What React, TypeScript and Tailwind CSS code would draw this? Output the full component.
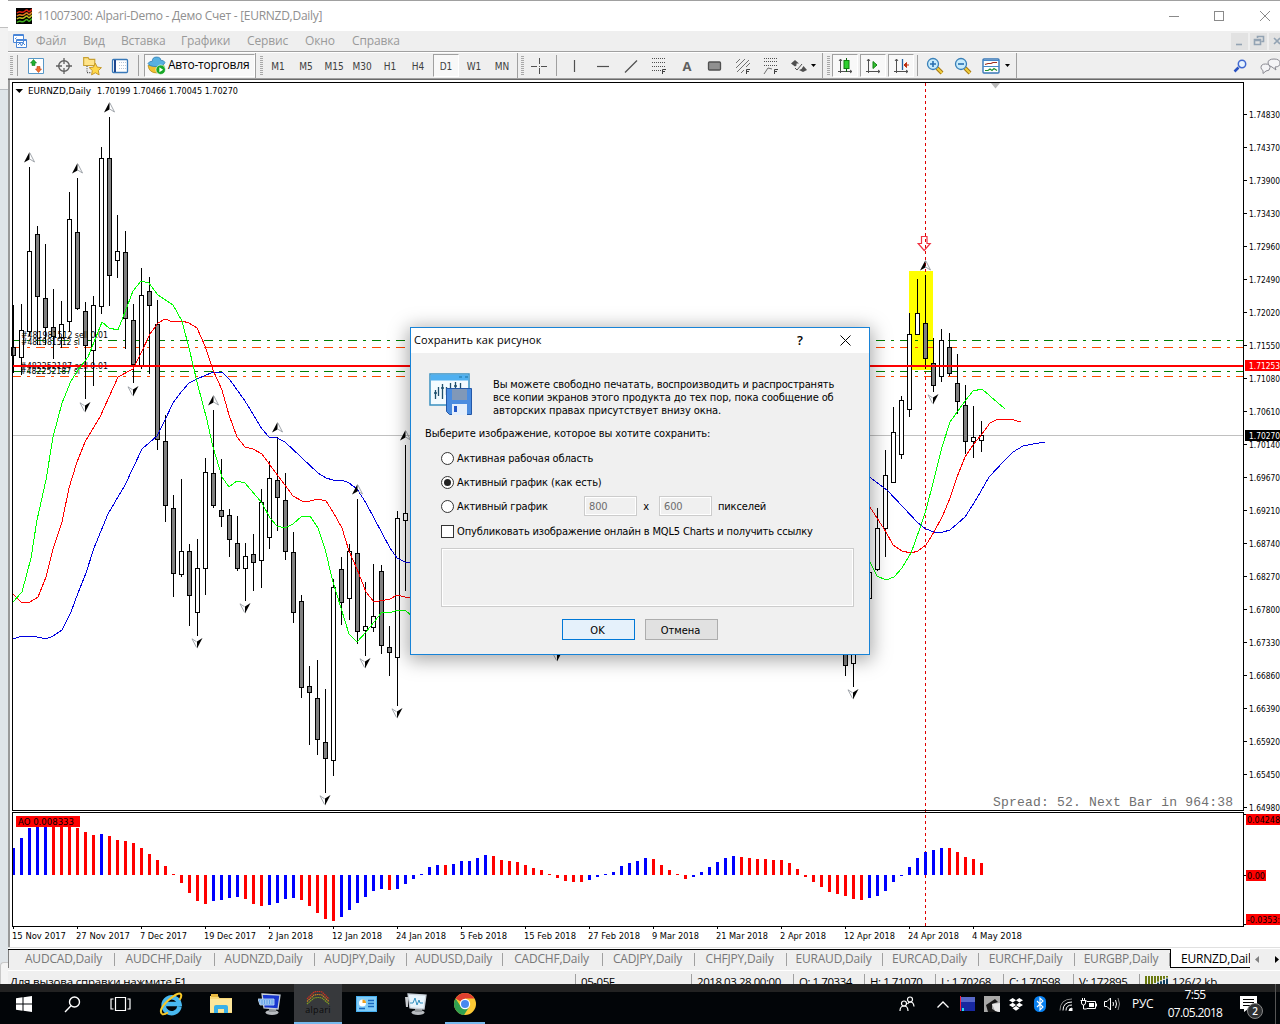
import clsx from "clsx";
import { FC, ReactNode } from "react";

/* ---------- chart data ---------- */

// x, high, low, body top, body bottom, 1 = bullish (hollow)
type Candle = [number, number, number, number, number, 0 | 1];

const candles: Candle[] = [
  [13, 305, 373, 347, 355, 0],
  [21, 304, 375, 330, 357, 1],
  [29, 167, 336, 251, 331, 1],
  [37, 226, 345, 234, 296, 0],
  [45, 244, 345, 298, 327, 0],
  [53, 289, 359, 327, 336, 0],
  [61, 301, 348, 324, 337, 1],
  [69, 192, 332, 219, 321, 1],
  [77, 178, 310, 232, 308, 0],
  [85, 302, 399, 311, 345, 0],
  [93, 296, 386, 305, 350, 1],
  [101, 147, 314, 158, 306, 1],
  [109, 117, 306, 158, 275, 0],
  [117, 215, 278, 251, 260, 1],
  [125, 231, 349, 252, 318, 0],
  [133, 304, 383, 320, 364, 0],
  [141, 268, 369, 295, 365, 1],
  [149, 277, 374, 291, 305, 0],
  [157, 300, 450, 324, 439, 0],
  [165, 415, 522, 441, 505, 0],
  [173, 495, 597, 508, 573, 0],
  [181, 479, 577, 551, 574, 1],
  [189, 544, 626, 551, 595, 0],
  [197, 539, 636, 568, 612, 1],
  [205, 458, 595, 472, 568, 1],
  [213, 410, 508, 473, 505, 0],
  [221, 459, 527, 510, 516, 0],
  [229, 509, 557, 515, 539, 0],
  [237, 516, 571, 543, 568, 0],
  [245, 543, 601, 556, 568, 1],
  [253, 534, 591, 554, 562, 0],
  [261, 489, 588, 502, 560, 1],
  [269, 461, 549, 478, 537, 1],
  [277, 437, 531, 480, 497, 0],
  [285, 473, 560, 500, 551, 0],
  [293, 532, 623, 552, 612, 0],
  [301, 595, 698, 601, 687, 0],
  [309, 666, 745, 686, 692, 0],
  [317, 660, 755, 698, 739, 0],
  [325, 689, 793, 742, 758, 0],
  [333, 579, 776, 587, 760, 1],
  [341, 557, 625, 569, 602, 0],
  [349, 544, 620, 551, 598, 1],
  [357, 499, 644, 553, 631, 0],
  [365, 582, 656, 626, 630, 1],
  [373, 564, 632, 616, 627, 1],
  [381, 565, 654, 571, 645, 0],
  [389, 626, 676, 647, 652, 0],
  [397, 511, 706, 518, 657, 1],
  [405, 445, 591, 513, 520, 1],
  [845, 600, 676, 620, 665, 0],
  [853, 600, 687, 620, 663, 1],
  [869, 560, 599, 572, 598, 1],
  [877, 508, 571, 528, 569, 1],
  [885, 450, 557, 475, 528, 1],
  [893, 407, 483, 432, 482, 1],
  [901, 396, 459, 400, 454, 1],
  [909, 313, 417, 334, 409, 1],
  [917, 279, 334, 313, 334, 1],
  [925, 275, 369, 323, 358, 0],
  [933, 338, 392, 363, 385, 0],
  [941, 329, 382, 340, 376, 1],
  [949, 333, 376, 347, 373, 0],
  [957, 354, 414, 383, 401, 0],
  [965, 385, 454, 405, 441, 0],
  [973, 406, 458, 437, 441, 1],
  [981, 421, 452, 435, 440, 1],
];

const upFractals = [
  [29, 152], [77, 163], [109, 102], [213, 395], [277, 422], [357, 484], [405, 430], [925, 260],
];
const downFractals = [
  [85, 402], [133, 386], [197, 638], [245, 603], [325, 795], [365, 658], [397, 708], [557, 651],
  [853, 689], [933, 394],
];

const greenLeft =
  "13,602 22,592 31,558 37,520 46,480 53,437 62,403 71,381 78,370 88,357 102,322 109,328 118,330 125,312 133,291 141,281 149,283 158,295 173,305 182,321 189,348 197,382 207,420 213,447 222,477 229,487 237,481 245,483 262,503 270,518 277,526 285,528 293,524 302,516 310,516 318,528 325,549 333,582 341,608 349,634 357,642 366,632 382,612 390,613 397,610 405,610 412,616";
const greenRight =
  "868,558 877,576 886,580 894,577 902,568 911,553 920,528 926,510 933,483 942,447 950,422 965,401 973,391 982,389 990,396 1005,409";
const redLeft =
  "13,594 22,603 30,602 38,597 46,577 53,549 62,522 69,488 77,462 85,442 100,417 118,377 133,369 142,351 150,334 158,323 165,319 173,322 182,321 189,323 197,328 205,346 213,370 222,390 229,415 237,437 245,447 253,449 262,454 270,465 293,496 302,501 310,501 318,499 326,501 333,512 342,528 349,551 357,569 366,592 374,602 390,599 397,595 405,597 412,598";
const redRight =
  "868,504 877,518 886,532 893,545 902,551 911,553 918,551 926,545 934,532 943,515 950,498 957,477 965,457 973,445 982,434 990,423 998,419 1010,419 1021,422";
const blueLeft =
  "13,639 22,636 33,636 46,639 53,636 62,630 71,612 78,593 86,573 94,548 108,514 125,485 142,449 157,436 165,420 173,403 182,391 189,383 197,379 213,372 222,372 230,380 245,401 262,429 269,437 277,438 285,442 318,473 326,478 333,480 342,480 349,483 357,489 366,503 382,533 390,548 397,558 405,562 412,562";
const blueRight =
  "868,476 887,490 903,507 918,523 926,529 934,532 943,532 950,530 965,517 974,503 981,491 989,477 1005,460 1013,452 1023,446 1033,444 1045,442";

// Awesome Oscillator: bar edge for every 8px step, negative sign marks a falling (red) bar
const oscillator = [
  848, 838, 828, 826, 826, -826, -826, -826, -828, -832, -835, 834, -836, -840, -841, -843, -848,
  -854, -860, -866, -874, -883, -893, -901, -904, 901, 900, 898, 897, -899, -904, -906, 905, 903,
  899, 898, -900, -906, -913, -919, -921, 917, 910, 903, 897, 891, 889, -890, 889, 884, 879, 874,
  867, 865, -865, 864, 861, 861, 858, 855, -856, -860, -861, -862, -865, -868, -870, -874, -878,
  -881, -882, -882, 880, 877, 874, 872, 866, 863, 861, 858, -859, -865, -870, -874, -879, 877, 872,
  867, 862, 858, 856, -857, -858, -859, -859, -860, -860, -863, -869, -877, -882, -887, -892, -894,
  -896, -899, -900, 898, 896, 891, 882, 876, 867, 858, 852, 850, 848, -848, -852, -857, -859, -863,
];

const prices = [
  "1.74830", "1.74370", "1.73900", "1.73430", "1.72960", "1.72490", "1.72020", "1.71550",
  "1.71080", "1.70610", "1.70140", "1.69670", "1.69210", "1.68740", "1.68270", "1.67800",
  "1.67330", "1.66860", "1.66390", "1.65920", "1.65450", "1.64980",
];

const dates: [string, number][] = [
  ["15 Nov 2017", 54], ["27 Nov 2017", 54], ["7 Dec 2017", 47], ["19 Dec 2017", 52],
  ["2 Jan 2018", 45], ["12 Jan 2018", 50], ["24 Jan 2018", 50], ["5 Feb 2018", 47],
  ["15 Feb 2018", 52], ["27 Feb 2018", 52], ["9 Mar 2018", 47], ["21 Mar 2018", 52],
  ["2 Apr 2018", 46], ["12 Apr 2018", 51], ["24 Apr 2018", 51], ["4 May 2018", 50],
];

/* ---------- chart ---------- */

interface ITag {
  x: number;
  y: number;
  w: number;
  fill?: string;
  children: string;
}

const Tag: FC<ITag> = ({ x, y, w, fill = "#000", children }) => (
  <text x={x} y={y} textLength={w} lengthAdjust="spacingAndGlyphs" fill={fill}>
    {children}
  </text>
);

const Level: FC<{ y: number; color: string }> = ({ y, color }) => (
  <path d={`M12 ${y + 0.5}H1243`} stroke={color} strokeDasharray="9 6 3 6" />
);

const Chart: FC = () => (
  <svg
    width="1270"
    height="867"
    viewBox="10 80 1270 867"
    className="block shrink-0 bg-white [font-family:'DejaVu_Sans_Condensed','DejaVu_Sans',sans-serif] text-[9.5px]"
    shapeRendering="crispEdges"
    fill="none"
  >
    <path d="M909 271h24v99h-24z" fill="#ff0" />
    <path d="M12 435.5H1243" stroke="#c0c0c0" />
    <path d="M925.5 83V926" stroke="#e00000" strokeDasharray="3 3" />
    <Level y={340} color="#008000" />
    <Level y={347} color="#ff4500" />
    <Level y={371} color="#008000" />
    <Level y={376} color="#ff4500" />

    {candles.map(([x, high, low, top, bottom, up]) => (
      <g key={x} stroke="#000">
        <path d={`M${x + 0.5} ${high}V${low}`} />
        <rect
          x={x - 1.5}
          y={top + 0.5}
          width={4}
          height={bottom - top}
          fill={up ? "#fff" : "#808080"}
        />
      </g>
    ))}

    <Tag x={21} y={338} w={87}>#481981512 sell 0.01</Tag>
    <Tag x={21} y={345} w={59}>#481981512 sl</Tag>
    <Tag x={20} y={369} w={88}>#482252187 sell 0.01</Tag>
    <Tag x={20} y={374} w={60}>#482252187 sl</Tag>
    <path d="M12 366H1243" stroke="#f00" strokeWidth="2" />

    <g strokeWidth="1">
      <polyline points={blueLeft} stroke="#0000e0" />
      <polyline points={blueRight} stroke="#0000e0" />
      <polyline points={redLeft} stroke="#f00" />
      <polyline points={redRight} stroke="#f00" />
      <polyline points={greenLeft} stroke="#0f0" />
      <polyline points={greenRight} stroke="#0f0" />
    </g>

    <g shapeRendering="auto">
      {upFractals.map(([x, y]) => (
        <g key={x} transform={`translate(${x + 0.5} ${y})`}>
          <path d="M0 0L-5.5 10.5L0 7.5Z" fill="#000" />
          <path d="M.4 1L5 10L.4 7.2" stroke="#8a9098" strokeWidth=".8" />
        </g>
      ))}
      {downFractals.map(([x, y]) => (
        <g key={x} transform={`translate(${x} ${y})`}>
          <path d="M0 10.5L5.5 0L0 3.5Z" fill="#000" />
          <path d="M-.4 9.5L-5 .8L-.4 3.8" stroke="#8a9098" strokeWidth=".8" />
        </g>
      ))}
      <path
        d="M921.5 236.500h5.500v7h3.200l-6 7l-6-7h3.300z"
        stroke="#f03040"
        strokeWidth="1.2"
      />
      <path d="M991 83h9l-4.500 5.500z" fill="#b8b8b8" />
      <path d="M15.500 89h7.500l-3.700 4z" fill="#000" />
    </g>
    <Tag x={28} y={94} w={63}>EURNZD,Daily</Tag>
    <Tag x={97} y={94} w={141}>1.70199 1.70466 1.70045 1.70270</Tag>
    <text
      x="993"
      y="806"
      fill="#707070"
      textLength="240"
      className="[font-family:'Liberation_Mono',monospace] text-[13px]"
    >
      Spread: 52. Next Bar in 964:38
    </text>

    {/* oscillator window */}
    {oscillator.map((edge, i) => {
      const y = Math.abs(edge);
      return (
        <rect
          key={i}
          x={i ? 12 + 8 * i : 13}
          y={Math.min(y, 875)}
          width={i ? 3 : 2}
          height={Math.abs(y - 875)}
          fill={edge < 0 ? "#f00" : "#00f"}
        />
      );
    })}
    <path d="M16 816h64v11h-64z" fill="#f00" />
    <Tag x={18} y={825} w={56}>AO 0.008333</Tag>

    {/* frames and scales */}
    <path d="M12.500 82.500H1243.500V810.500H12.500zM12.500 812.500H1243.500V926.500H12.500z" stroke="#000" />
    <path d="M1244 814.500h3M1244 875.500h3M1244 924.500h3" stroke="#000" />
    {prices.map((p, i) => (
      <g key={p}>
        <path d={`M1244 ${114.5 + 33 * i}h3`} stroke="#000" />
        <Tag x={1249} y={118 + 33 * i} w={31}>{p}</Tag>
      </g>
    ))}
    <path d="M1245 360h35v11h-35z" fill="#f00" />
    <Tag x={1249} y={369} w={31} fill="#fff">1.71253</Tag>
    <path d="M1245 430h35v11h-35z" fill="#000" />
    <Tag x={1249} y={439} w={31} fill="#fff">1.70270</Tag>
    <path d="M1246 814h34v11h-34zM1246 870h20v11h-20zM1246 914h34v11h-34z" fill="#f00" />
    <Tag x={1247} y={823} w={33}>0.04248</Tag>
    <Tag x={1247} y={879} w={18}>0.00</Tag>
    <Tag x={1247} y={923} w={33}>-0.0353:</Tag>
    {dates.map(([label, w], i) => (
      <g key={label}>
        <path d={`M${13.5 + 64 * i} 927v2`} stroke="#000" />
        <Tag x={12 + 64 * i} y={939} w={w}>{label}</Tag>
      </g>
    ))}
  </svg>
);

/* ---------- window chrome ---------- */

const TitleBar: FC = () => (
  <div className="flex h-[31px] shrink-0 items-center border-t border-[#a0a0a0] bg-white pl-2">
    <svg width="16" height="16" viewBox="0 0 16 16" fill="none" strokeWidth="1.5">
      <rect width="16" height="16" fill="#000" />
      <path d="M1 5q2-2 4-1t4-1t3 0t4-2" stroke="#e02010" />
      <path d="M1 8q2-2 4-1t4-1t3 0t4-2" stroke="#e88020" />
      <path d="M1 11q2-2 4-1t4-1t3 0t4-2" stroke="#c0c020" />
      <path d="M1 14.500q2-2 4-1t4-1t3 0t4-2" stroke="#40b020" />
    </svg>
    <span className="ml-[5px] flex-1 text-xs tracking-[-0.27px] text-[#8f8f8f]">
      11007300: Alpari-Demo - Демо Счет - [EURNZD,Daily]
    </span>
    <svg width="112" height="12" viewBox="0 0 112 12" fill="none" stroke="#8a8a8a">
      <path d="M1 6.500h10" shapeRendering="crispEdges" />
      <path d="M46.500 1.500h9v9h-9z" shapeRendering="crispEdges" />
      <path d="M92 1l10 10M102 1L92 11" />
    </svg>
  </div>
);

const menu: [string, string][] = [
  ["Файл", "w-[47px]"],
  ["Вид", "w-[38px]"],
  ["Вставка", "w-[60px]"],
  ["Графики", "w-[66px]"],
  ["Сервис", "w-[58px]"],
  ["Окно", "w-[47px]"],
  ["Справка", "w-[60px]"],
];

const MenuBar: FC = () => (
  <div className="flex h-5 shrink-0 items-center bg-[#efefef] pl-[5px]">
    <svg width="15" height="15" viewBox="0 0 15 15" fill="#fff" stroke="#4a86d8">
      <path d="M.5.500h10v8h-10zM3.500 5.500h10v8h-10z" />
      <path d="M.5 1.500h10M3.500 6.500h10M5 11l2-2l1.500 3l1.500-3l2 2M2 5l1.500-1.500" fill="none" />
    </svg>
    <nav className="ml-[8px] flex flex-1 text-xs tracking-[-0.15px] text-[#999]">
      {menu.map(([label, width]) => (
        <span key={label} className={width}>
          {label}
        </span>
      ))}
    </nav>
    <div className="flex gap-0.5">
      {["M5 11.500h6", "M7.500 5V3.500h6v5h-2M4.500 6.500h6v5h-6zM4.500 7.500h6", "M5 5l6 6M11 5l-6 6"].map((d) => (
        <svg key={d} width="17" height="17" viewBox="0 0 17 17" className="bg-[#e2e2e2] last:w-[11px]" preserveAspectRatio="xMinYMid slice">
          <path d={d} fill="none" stroke="#93a3b3" strokeWidth="1.600" />
        </svg>
      ))}
    </div>
  </div>
);

const Grip: FC = () => (
  <span className="h-[19px] w-[3px] shrink-0 bg-[repeating-linear-gradient(#a8a8a8_0_1px,#efefef_1px_2px)]" />
);

const Divider: FC<{ className?: string }> = ({ className }) => (
  <span className={clsx("w-px shrink-0 bg-[#a0a0a0]", className ?? "h-[21px]")} />
);

const Tool: FC<{ children: ReactNode; active?: boolean }> = ({ children, active }) => (
  <span className="flex w-7 shrink-0 justify-center">
    <span
      className={clsx(
        "flex h-[23px] w-[26px] items-center justify-center border text-[10px] text-[#404040]",
        active
          ? "border-t-[#a0a0a0] border-r-white border-b-white border-l-[#a0a0a0] bg-[#f8f8f8]"
          : "border-transparent"
      )}
    >
      {children}
    </span>
  </span>
);

const Glyph: FC<{ children: ReactNode; size?: number }> = ({ children, size = 18 }) => (
  <svg width={size} height={size} viewBox="0 0 18 18" fill="none" stroke="#505050" className="shrink-0">
    {children}
  </svg>
);

const Caret: FC = () => (
  <svg width="5" height="3" viewBox="0 0 5 3" className="shrink-0">
    <path d="M0 0h5L2.500 3z" />
  </svg>
);

const Magnifier: FC<{ sign: string }> = ({ sign }) => (
  <Glyph>
    <path d="M11 11l5 5" stroke="#a87810" strokeWidth="4" />
    <path d="M11 11l5 5" stroke="#f0d040" strokeWidth="2" />
    <circle cx="7" cy="7" r="5.500" fill="#c8ecfc" stroke="#3a80b8" strokeWidth="1.300" />
    <path d={sign} stroke="#2870b0" strokeWidth="1.600" />
  </Glyph>
);

const Axes = () => <path d="M4.500 2v14M2 14.500h14M3 4l1.500-2L6 4M14 13l2 1.500l-2 1.500" stroke="#505050" />;

const FLetter = () => <path d="M12.500 17v-4.500H16M12.500 14.500H15" stroke="#404040" />;

const ToolBar: FC = () => (
  <div className="flex h-7 shrink-0 items-center border-t border-b border-t-[#a0a0a0] border-b-[#a0a0a0] bg-[#efefef] pt-px pl-0.5 shadow-[inset_0_1px_0_#fff]">
    <Grip />
    <Divider className="ml-[4px] h-[21px]" />
    <span className="ml-[4px] flex">
      <Tool>
        <Glyph>
          <path d="M1.500 1.500h15v15h-15z" fill="#fff" stroke="#5898c8" />
          <path d="M6.500 2.500l3 3.500h-1.500v2.500h-3V6H3.500z" fill="#20b030" stroke="#108020" strokeWidth=".6" />
          <path d="M11.500 15.500l-3-3.500H10V9.500h3v2.500h1.500z" fill="#f07030" stroke="#c04010" strokeWidth=".6" />
        </Glyph>
      </Tool>
      <Tool>
        <Glyph>
          <circle cx="9" cy="9" r="5.300" strokeWidth="1.400" stroke="#606060" />
          <path d="M9 1v6M9 11v6M1 9h6M11 9h6" stroke="#606060" strokeWidth="1.300" />
        </Glyph>
      </Tool>
      <Tool>
        <Glyph size={20}>
          <path d="M1.500 8.500v-7h4l1 1.500h5v5.500z" fill="#ffe48a" stroke="#c8a030" />
          <path d="M4.500 9v6h4" strokeDasharray="1 1" />
          <path d="M12 6.500l1.700 3.500l3.800.5l-2.800 2.600l.7 3.900l-3.400-1.900L8.600 17l.7-3.900L6.500 10.500l3.800-.5z" fill="#ffd84a" stroke="#c09020" strokeWidth=".8" />
        </Glyph>
      </Tool>
      <Tool>
        <Glyph>
          <rect x="1.500" y="2.500" width="15" height="13" rx="1" fill="#fff" stroke="#3878b8" strokeWidth="1.300" />
          <path d="M4 3v12" stroke="#204890" strokeWidth="2" />
          <path d="M8 5.500h7M8 8.500h7M8 11.500h7" stroke="#b8c8d8" strokeDasharray="1 1" />
        </Glyph>
      </Tool>
    </span>
    <Divider className="ml-[4px] h-[21px]" />
    <span className="ml-[5px] flex h-[23px] w-[111px] items-center border border-t-[#a0a0a0] border-r-white border-b-white border-l-[#a0a0a0] bg-[#f8f8f8] pl-0.5 text-xs text-black">
      <Glyph size={19}>
        <path d="M1 9q1 7 8 7t7-7z" fill="#f0c030" stroke="#b08810" strokeWidth=".7" />
        <path d="M1 7q1-2 4-2q0-4 4-4t4 3q3 0 4 2q-1 4-8 4T1 7z" fill="#58b0e0" stroke="#2878b0" strokeWidth=".7" />
        <circle cx="13" cy="13" r="4.500" fill="#18a828" stroke="#fff" strokeWidth=".6" />
        <path d="M11.700 10.700v4.600l3.600-2.300z" fill="#fff" stroke="none" />
      </Glyph>
      <span className="-mt-px ml-[2px] whitespace-nowrap tracking-[-0.22px]">Авто-торговля</span>
    </span>
    <Divider className="h-[25px]" />
    <span className="ml-[4px] flex">
      <Grip />
    </span>
    <span className="ml-px flex pt-0.5 [font-family:'DejaVu_Sans_Condensed','DejaVu_Sans',sans-serif]">
      {["M1", "M5", "M15", "M30", "H1", "H4"].map((p) => (
        <Tool key={p}>{p}</Tool>
      ))}
    </span>
    <span className="flex [font-family:'DejaVu_Sans_Condensed','DejaVu_Sans',sans-serif]">
      <Tool active>
        <span className="mt-0.5">D1</span>
      </Tool>
    </span>
    <span className="flex pt-0.5 [font-family:'DejaVu_Sans_Condensed','DejaVu_Sans',sans-serif]">
      <Tool>W1</Tool>
      <Tool>MN</Tool>
    </span>
    <Divider className="ml-px h-[25px]" />
    <span className="ml-[3px] flex">
      <Grip />
    </span>
    <span className="ml-px flex">
      <Tool>
        <Glyph>
          <path d="M9.500 1v6M9.500 11v6M1 9.500h6M11 9.500h6M9 9.500h1" shapeRendering="crispEdges" />
        </Glyph>
      </Tool>
    </span>
    <Divider className="ml-[3px] h-[21px]" />
    <span className="ml-[4px] flex">
      <Tool><Glyph><path d="M8.500 3v12" strokeWidth="1.200" /></Glyph></Tool>
      <Tool><Glyph><path d="M3 9.500h12" strokeWidth="1.200" /></Glyph></Tool>
      <Tool><Glyph><path d="M3 15.500L15 3.500" strokeWidth="1.200" /></Glyph></Tool>
      <Tool>
        <Glyph>
          <path d="M2 1.500h13M2 5.500h13M2 9.500h13M2 13.500h9" strokeDasharray="1 1" />
          <FLetter />
        </Glyph>
      </Tool>
      <Tool><span className="mt-0.5 text-[13px] font-bold text-[#606060]">A</span></Tool>
      <Tool><Glyph><rect x="2.500" y="5" width="12" height="8" rx="1" fill="#909090" strokeWidth="1.300" /></Glyph></Tool>
      <Tool>
        <Glyph>
          <path d="M2 6l4-4M2 11L11 2M3 15L15 3M7 16l3-3M12 10l4-4" stroke="#707070" />
          <FLetter />
        </Glyph>
      </Tool>
      <Tool>
        <Glyph>
          <path d="M2 1.500h14M2 4.500h14M2 8.500h14" strokeDasharray="1 1" />
          <path d="M2 17l4-6l4 1" stroke="#707070" />
          <FLetter />
        </Glyph>
      </Tool>
    </span>
    <span className="ml-[5px] flex items-center gap-[3px]">
      <Glyph>
        <path d="M5 3l4 3.500h-2.500v2L5 9.500L1 6.500zM13.500 9l3.500 4l-4 2l-4-2l2.500-1z" fill="#505050" stroke="none" />
        <path d="M5 11l2 2l5-6" />
      </Glyph>
      <Caret />
    </span>
    <Divider className="ml-[6px] h-[25px]" />
    <span className="ml-[4px] flex">
      <Grip />
    </span>
    <span className="ml-px flex">
      <Tool active>
        <Glyph>
          <Axes />
          <path d="M10.500 1v14" stroke="#106010" />
          <rect x="8" y="3.500" width="5" height="8" fill="#30d030" stroke="#108010" />
        </Glyph>
      </Tool>
      <Tool active>
        <Glyph>
          <Axes />
          <path d="M9 4.500v7l4-3.500z" fill="#30c030" stroke="#108010" />
        </Glyph>
      </Tool>
      <Tool active>
        <Glyph>
          <Axes />
          <path d="M10.500 2v11" stroke="#2060a0" strokeWidth="1.300" />
          <path d="M17 8h-4M14.500 5.500L12 8l2.500 2.500z" fill="#c03010" stroke="#c03010" />
        </Glyph>
      </Tool>
    </span>
    <Divider className="ml-[2px] h-[21px]" />
    <span className="ml-[3px] flex">
      <Tool><Magnifier sign="M4 7h6M7 4v6" /></Tool>
      <Tool><Magnifier sign="M4 7h6" /></Tool>
      <Tool>
        <Glyph>
          <rect x="1" y="2" width="16" height="14" rx="1" fill="#fff" stroke="#3878b8" strokeWidth="1.400" />
          <path d="M1 3.500h16M1 9.500h16" stroke="#4888c8" strokeWidth="1.200" />
          <path d="M3 7.500l3-1h3l2-1h4" stroke="#a03020" strokeWidth="1.200" />
          <path d="M3 13.500h3l2-1.500l2 1.500l2-2l3 2" stroke="#209030" strokeWidth="1.200" />
        </Glyph>
      </Tool>
    </span>
    <Caret />
    <Divider className="ml-[6px] h-[25px]" />
    <span className="ml-auto flex items-center">
      <svg width="14" height="14" viewBox="0 0 14 14" fill="none">
        <path d="M5.500 8.500L1.500 12.500" stroke="#2850c0" strokeWidth="2.500" />
        <circle cx="9" cy="5" r="3.700" fill="#e8f4ff" stroke="#4068d0" strokeWidth="1.500" />
      </svg>
      <svg width="20" height="18" viewBox="0 0 20 18" className="ml-[13px]" fill="#f4f4f6" stroke="#8a8a92">
        <path d="M8 6q0-4 6-4t6 4t-5 4l1 3l-4-3q-4-1-4-4z" />
        <path d="M1 10.500q0-3.500 4.500-3.500t4.500 3.500t-4 3.500l-3 2.500v-3q-2-1-2-3z" />
      </svg>
    </span>
  </div>
);

/* ---------- save dialog ---------- */

const Radio: FC<{ label: string; checked?: boolean; children?: ReactNode }> = ({
  label,
  checked,
  children,
}) => (
  <div className="flex h-6 items-center">
    <span className="flex size-[13px] items-center justify-center rounded-full border border-[#333] bg-white">
      {checked && <span className="size-[7px] rounded-full bg-[#222]" />}
    </span>
    <span className="mt-px ml-[3px] w-[127px] whitespace-nowrap">{label}</span>
    {children}
  </div>
);

const SizeField: FC<{ value: string }> = ({ value }) => (
  <span className="flex h-5 w-[53px] items-center border border-[#ccc] pl-1 text-[#6d6d6d] shadow-[inset_0_0_0_1px_#fff]">
    {value}
  </span>
);

const SaveDialog: FC = () => (
  <div className="absolute top-[327px] left-[410px] h-[328px] w-[460px] border border-[#1883d7] bg-[#f0f0f0] text-[11px] leading-[13px] text-black shadow-[0_3px_18px_2px_rgba(0,0,0,0.35)] [font-family:'DejaVu_Sans_Condensed','DejaVu_Sans',sans-serif]">
    <div className="flex h-[25px] items-center bg-white pl-[3px] [font-family:'Open_Sans','Noto_Sans',sans-serif]">
      <span className="-mt-0.5 flex-1 tracking-[0.14px]">Сохранить как рисунок</span>
      <span className="-mt-px mr-[37px] text-[13px] font-semibold">?</span>
      <svg width="11" height="11" viewBox="0 0 11 11" className="-mt-px mr-[18px]" stroke="#000">
        <path d="M.5.5l10 10M10.500.5l-10 10" />
      </svg>
    </div>
    <div className="flex flex-col pt-5 pr-[15px] pl-[14px]">
      <div className="flex h-[47px] pl-1">
        <svg width="44" height="43" viewBox="0 0 44 43" className="shrink-0" fill="none">
          <rect x="1" y="1" width="39" height="31" fill="#f4fbff" stroke="#3a90c0" strokeWidth="1.500" />
          <path d="M1.500 1.500h38v6h-38z" fill="#50b0f0" />
          <path d="M30 4h3M36 4h3" stroke="#1870a0" />
          <path d="M6.500 17v9M9.500 14v9M13.500 11v15M17.500 14v8M21.500 10v12M26.500 9v10M31.500 10v8M5 20h3M12 15h3M20 17h3M25 13h3" stroke="#20506c" strokeWidth="1.300" />
          <path d="M17.500 15.500h25v26H20.500l-3-3z" fill="#4a8ce0" stroke="#2458a8" />
          <path d="M23 16h15v11H23z" fill="#8098b8" />
          <path d="M23 31h15v11H23z" fill="#e4eefa" />
          <path d="M25 33h3v6h-3z" fill="#2458c8" />
        </svg>
        <p className="mt-[5px] ml-5 w-[350px] tracking-[-0.13px] whitespace-nowrap">
          Вы можете свободно печатать, воспроизводить и распространять
          <br />
          <span className="tracking-[-0.11px]">
            все копии экранов этого продукта до тех пор, пока сообщение об
          </span>
          <br />
          <span className="tracking-[-0.08px]">авторских правах присутствует внизу окна.</span>
        </p>
      </div>
      <span className="mt-[7px] h-[13px] tracking-[-0.09px]">
        Выберите изображение, которое вы хотите сохранить:
      </span>
      <div className="mt-[6px] flex flex-col pl-4 tracking-[-0.14px]">
        <Radio label="Активная рабочая область" />
        <Radio label="Активный график (как есть)" checked />
        <Radio label="Активный график">
          <SizeField value="800" />
          <span className="w-[22px] pr-1 text-center">x</span>
          <SizeField value="600" />
          <span className="ml-[6px]">пикселей</span>
        </Radio>
        <div className="mt-[6px] flex h-[14px] items-center">
          <span className="size-[13px] border border-[#333] bg-white" />
          <span className="mt-px ml-[3px] whitespace-nowrap tracking-[-0.16px]">
            Опубликовать изображение онлайн в MQL5 Charts и получить ссылку
          </span>
        </div>
        <div className="mt-[10px] h-[59px] w-[413px] border border-[#ccc] shadow-[inset_0_0_0_1px_#fff]" />
      </div>
      <div className="mt-3 flex gap-[10px] pl-[137px]">
        <button className="h-[21px] w-[73px] border border-[#0078d7] bg-[#e5f1fb] pt-px pr-[2px]">OK</button>
        <button className="h-[21px] w-[73px] border border-[#adadad] bg-[#e1e1e1] pt-px pr-[2px]">Отмена</button>
      </div>
    </div>
  </div>
);

/* ---------- bottom bars ---------- */

const tabs: [string, string][] = [
  ["AUDCAD,Daily", "w-[100px]"],
  ["AUDCHF,Daily", "w-[100px]"],
  ["AUDNZD,Daily", "w-[100px]"],
  ["AUDJPY,Daily", "w-[92px]"],
  ["AUDUSD,Daily", "w-[96px]"],
  ["CADCHF,Daily", "w-[100px]"],
  ["CADJPY,Daily", "w-[92px]"],
  ["CHFJPY,Daily", "w-[92px]"],
  ["EURAUD,Daily", "w-[96px]"],
  ["EURCAD,Daily", "w-[96px]"],
  ["EURCHF,Daily", "w-[96px]"],
  ["EURGBP,Daily", "w-[95px]"],
];

const ChartTabs: FC = () => (
  <div className="flex h-[22px] shrink-0 border-t border-b border-t-black border-b-white bg-[#efefef] text-xs tracking-[-0.2px] text-[#777]">
    <span className="h-[18px] w-[7px] shrink-0 border-l border-[#808080]" />
    {tabs.map(([label, width]) => (
      <span key={label} className={clsx("flex h-[18px] shrink-0 items-center justify-center", width)}>
        <span className="flex-1 pr-[2px] text-center leading-[18px]">{label}</span>
        <Divider className="h-[13px]" />
      </span>
    ))}
    <span className="-mt-px h-[19px] w-[80px] shrink-0 overflow-hidden border-b border-l border-black bg-white pl-[10px] leading-[19px] whitespace-nowrap text-black">
      EURNZD,Daily
    </span>
    <span className="-mt-px flex flex-1 items-center justify-between bg-[#efefef] pr-px pl-[5px]">
      <svg width="4" height="7" viewBox="0 0 4 7"><path d="M4 0v7L0 3.500z" fill="#808080" /></svg>
      <svg width="4" height="7" viewBox="0 0 4 7"><path d="M0 0v7l4-3.500z" /></svg>
    </span>
  </div>
);

const status: [string, string][] = [
  ["05-05F", "w-[116px]"],
  ["2018.03.28 00:00", "w-[102px]"],
  ["O: 1.70334", "w-[71px]"],
  ["H: 1.71070", "w-[71px]"],
  ["L: 1.70268", "w-[68px]"],
  ["C: 1.70598", "w-[70px]"],
  ["V: 172895", "w-[66px]"],
];

const StatusBar: FC = () => (
  <div className="flex h-[14px] shrink-0 items-start overflow-hidden bg-[#efefef] text-[11.5px] leading-[22px] tracking-[-0.45px] whitespace-nowrap text-black">
    <span className="w-[567px] pl-0.5 tracking-[-0.18px]">Для вызова справки нажмите F1</span>
    {status.map(([label, width]) => (
      <span key={label} className={clsx("flex shrink-0", width)}>
        <Divider className="mt-[3px] h-5" />
        <span className="ml-[5px]">{label}</span>
      </span>
    ))}
    <Divider className="mt-[3px] h-5" />
    <svg width="23" height="13" viewBox="0 0 23 13" className="mt-[5px] ml-[5px] shrink-0">
      {[0, 3, 6, 9, 12, 15, 18, 21].map((x) => (
        <g key={x}>
          <rect x={x} width="2" height={11 - x * 0.45} fill="#6b7a10" />
          <rect x={x} y={12 - x * 0.45} width="2" height="13" fill="#104060" />
        </g>
      ))}
    </svg>
    <span className="ml-1 tracking-[-0.2px]">126/2 kb</span>
  </div>
);

const TaskSlot: FC<{ children: ReactNode; className?: string }> = ({ children, className }) => (
  <span className={clsx("flex h-10 shrink-0 items-center justify-center", className ?? "w-[49px]")}>
    {children}
  </span>
);

const Monitor: FC<{ screen: string; children?: ReactNode }> = ({ screen, children }) => (
  <svg width="24" height="24" viewBox="0 0 24 24" fill="none">
    <ellipse cx="14" cy="20.500" rx="6.500" ry="2.500" fill="#b8bcc0" />
    <path d="M11 15h7v5h-7z" fill="#909498" />
    <path d="M4 2l18 1l-2 14L6 16z" fill={screen} stroke="#c8d0d8" strokeWidth="1.300" />
    {children}
  </svg>
);

const TaskBar: FC = () => (
  <footer className="flex h-10 shrink-0 items-center bg-[linear-gradient(#222_0_8px,#020508_8px)] text-white">
    <TaskSlot className="w-12">
      <svg width="16" height="16" viewBox="0 0 16 16" fill="#fff">
        <path d="M0 2.200l6.500-.9v6.200H0zM7.500 1.200L16 0v7.500H7.500zM0 8.500h6.500v6.200L0 13.800zM7.500 8.500H16V16l-8.500-1.200z" />
      </svg>
    </TaskSlot>
    <TaskSlot className="w-12">
      <svg width="17" height="17" viewBox="0 0 17 17" fill="none" stroke="#fff" strokeWidth="1.400">
        <circle cx="10.500" cy="6" r="5" />
        <path d="M7 9.800L1 16" />
      </svg>
    </TaskSlot>
    <TaskSlot className="w-12">
      <svg width="21" height="16" viewBox="0 0 21 16" fill="none" stroke="#fff" strokeWidth="1.200">
        <path d="M5.500 1.500h10v13h-10zM3.500 3H1v10h2.500M17.500 3H20v10h-2.500" />
      </svg>
    </TaskSlot>
    <TaskSlot className="ml-[2px] w-[50px]">
      <svg width="24" height="24" viewBox="0 0 24 24" fill="none">
        <path d="M20.500 14.500A8 8 0 1 1 20.500 12H7" stroke="#48b8f0" strokeWidth="4.500" />
        <path d="M3 22Q-1 18 9 8.500Q20-1 22 2.500Q23 4.500 20.500 8" stroke="#f8c828" strokeWidth="2" />
        <path d="M3 22q2 1 6-1.500" stroke="#f8c828" strokeWidth="2" />
      </svg>
    </TaskSlot>
    <TaskSlot>
      <svg width="22" height="20" viewBox="0 0 22 20">
        <path d="M0 2h8l1.500 2H22v15H0z" fill="#f8d878" />
        <path d="M1 0h7v3H1z" fill="#e8b840" />
        <path d="M0 5h22v13H0z" fill="#fde69a" />
        <path d="M4 19v-6q0-2 2-2h10q2 0 2 2v6h-4v-4H8v4z" fill="#38b0e8" />
      </svg>
    </TaskSlot>
    <TaskSlot>
      <Monitor screen="#1838d0">
        <path d="M0 7h16v6H2z" fill="#60a0e8" stroke="#d0e4f8" strokeWidth=".8" />
        <path d="M2 9h13M2 11h13" stroke="#fff" strokeWidth=".8" strokeDasharray="1.500 1" />
      </Monitor>
    </TaskSlot>
    <TaskSlot className="w-12 border-b-2 border-[#76b9ed] bg-[#37393c]">
      <span className="flex flex-col items-center">
        <svg width="24" height="14" viewBox="0 0 24 14" fill="none" strokeWidth="1.200" strokeDasharray="1.500 .6">
          <path d="M1 8L8 1q4-1 8 0l7 7" stroke="#d03020" />
          <path d="M1 10.500L8 4q4-1 8 0l7 6.500" stroke="#d08020" />
          <path d="M1 13L8 7q4-1 8 0l7 6" stroke="#80a020" />
        </svg>
        <span className="text-[9px] leading-[10px] tracking-[0.3px] text-[#0c0c0c]">alpari</span>
      </span>
    </TaskSlot>
    <TaskSlot>
      <svg width="21" height="16" viewBox="0 0 21 16" fill="none">
        <rect width="21" height="16" fill="#48b0f0" />
        <path d="M1 1h19v14H1z" fill="#80ccf8" />
        <circle cx="6.500" cy="7" r="3.500" fill="#fff" />
        <path d="M6.500 7V3.500A3.500 3.500 0 0 1 10 7z" fill="#f0a020" />
        <path d="M12 4.500h6M12 7.500h6M12 10.500h6M3 12.500h6" stroke="#1868c0" strokeWidth="1.400" />
      </svg>
    </TaskSlot>
    <TaskSlot>
      <Monitor screen="#e8f4fc">
        <path d="M1 5h3v10H2z" fill="#c8ccd0" />
        <path d="M6 11h3l2-5l2 7l2-5l1 3h3" stroke="#3090c0" />
      </Monitor>
    </TaskSlot>
    <TaskSlot className="relative w-[49px]">
      <svg width="22" height="22" viewBox="0 0 22 22">
        <circle cx="11" cy="11" r="11" fill="#fcc934" />
        <path d="M11 11L1.500 5.500A11 11 0 0 1 20.500 5.500H11z" fill="#e04030" />
        <path d="M1.500 5.500A11 11 0 0 0 10 22l5.500-8.500L6.500 13z" fill="#30a050" />
        <circle cx="11" cy="11" r="5.200" fill="#fff" />
        <circle cx="11" cy="11" r="4" fill="#4888f0" />
      </svg>
      <span className="absolute bottom-0 h-0.5 w-10 bg-[#76b9ed]" />
    </TaskSlot>

    <span className="ml-auto flex h-10 items-center">
      <svg width="16" height="16" viewBox="0 0 16 16" fill="none" stroke="#fff" strokeWidth="1.200">
        <circle cx="5" cy="7.500" r="2.500" />
        <path d="M1 15q0-5 4-5t4 5" />
        <circle cx="11" cy="3.500" r="2.500" />
        <path d="M8.500 8q1-2 3-2q3 0 3.500 4.500" />
      </svg>
      <svg width="12" height="7" viewBox="0 0 12 7" className="ml-[22px]" fill="none" stroke="#fff" strokeWidth="1.300">
        <path d="M.5 6.500L6 1l5.500 5.500" />
      </svg>
      <svg width="16" height="16" viewBox="0 0 16 16" className="ml-[11px]">
        <path d="M1 1h14v14H1z" fill="#1828a0" />
        <path d="M1 1h14v5H1z" fill="#5868c8" />
        <path d="M0 0h1v15h-1z" fill="#f02040" />
        <path d="M2 12h2v3H2z" fill="#20e0f0" />
      </svg>
      <svg width="16" height="16" viewBox="0 0 16 16" className="ml-2">
        <path d="M0 0h16v16H0z" fill="#a8a8a8" />
        <path d="M2 9l9-6l3 3l-6 2v5l6 3H4z" fill="#181818" />
        <path d="M8 8l8-1v9l-5-1z" fill="#e8e8e8" />
      </svg>
      <svg width="14" height="13" viewBox="0 0 14 13" className="ml-[9px]" fill="#fff">
        <path d="M3.700 0L7 2.300L3.700 4.500L0 2.300zM10.300 0L14 2.300l-3.700 2.200L7 2.300zM3.700 4.800L7 7L3.700 9.300L0 7zM10.300 4.800L14 7l-3.700 2.300L7 7zM7 8l3.500 2.300L7 12.800l-3.500-2.500z" />
      </svg>
      <svg width="12" height="16" viewBox="0 0 12 16" className="ml-[11px]" fill="none">
        <rect width="12" height="16" rx="5.500" fill="#0880f0" />
        <path d="M3 5l6 6l-3 3V2l3 3l-6 6" stroke="#fff" strokeWidth="1.100" />
      </svg>
      <svg width="14" height="13" viewBox="0 0 14 13" className="ml-[13px]" fill="none" stroke="#fff">
        <path d="M1 12.500Q1 1 13 1" stroke="#888" />
        <path d="M4 12.500Q4 4 13 4M7 12.500Q7 7 13 7" />
        <path d="M10 13q0-3 3-3v3z" fill="#fff" />
      </svg>
      <svg width="17" height="13" viewBox="0 0 17 13" className="ml-[7px]" fill="none" stroke="#fff">
        <path d="M6.500 3.500h9v7h-9M16.500 5.500v3M1.500 2v3q0 2 2 2t2-2V2M.5 2.500h6M2.500 0v2M4.500 0v2M3.500 7v4h3" />
        <path d="M9 5h5v4H9z" fill="#fff" stroke="none" />
      </svg>
      <svg width="17" height="14" viewBox="0 0 17 14" className="ml-[7px]" fill="none" stroke="#fff">
        <path d="M.5 4.500H3L6.500 1v12L3 9.500H.5zM9 5q1 2 0 4M11.500 3q2 4 0 8" />
        <path d="M14 1q3 6 0 12" stroke="#888" />
      </svg>
      <span className="ml-[11px] w-[23px] text-xs tracking-[-0.3px]">РУС</span>
      <span className="ml-3 w-14 text-center text-xs leading-[18px] tracking-[-0.65px] whitespace-nowrap">
        7:55
        <br />
        07.05.2018
      </span>
      <span className="relative ml-[17px] w-[35px]">
        <svg width="17" height="16" viewBox="0 0 17 16" fill="#fff">
          <path d="M0 0h17v13H8l-4 3v-3H0z" />
          <path d="M3 3.500h11M3 6.500h11M3 9.500h7" stroke="#000" />
        </svg>
        <span className="absolute top-[7px] left-[7px] flex size-4 items-center justify-center rounded-full border border-[#888] bg-[#303234] text-[10px] font-semibold">
          2
        </span>
      </span>
      <span className="h-10 w-[5px] border-l border-[#555]" />
    </span>
  </footer>
);

export default function App() {
  return (
    <div className="relative flex h-[1024px] w-[1280px] flex-col overflow-hidden bg-[#efefef] [font-family:'Open_Sans','Noto_Sans',sans-serif]">
      <div className="flex h-[984px] shrink-0">
        <aside className="flex w-2 shrink-0 flex-col bg-[#dfe4e8]">
          <span className="h-[28px] border-b border-[#c0c0c0] bg-white" />
          <span className="h-[62px] border-b border-[#b8bcc0] bg-[#f2f2f2]" />
          <span className="mt-auto h-[22px] rounded-tl border-t border-l border-[#c8c8c8] bg-[#f4f4f4]" />
        </aside>
        <main className="flex w-[1272px] flex-col">
          <TitleBar />
          <MenuBar />
          <ToolBar />
          <div className="flex h-[868px] shrink-0 border-t border-[#696969] bg-white">
            <span className="w-0.5 shrink-0 bg-[#999]" />
            <Chart />
          </div>
          <div className="h-[2px] shrink-0 border-t border-[#e0e0e0] bg-white" />
          <ChartTabs />
          <StatusBar />
        </main>
      </div>
      <TaskBar />
      <SaveDialog />
    </div>
  );
}
